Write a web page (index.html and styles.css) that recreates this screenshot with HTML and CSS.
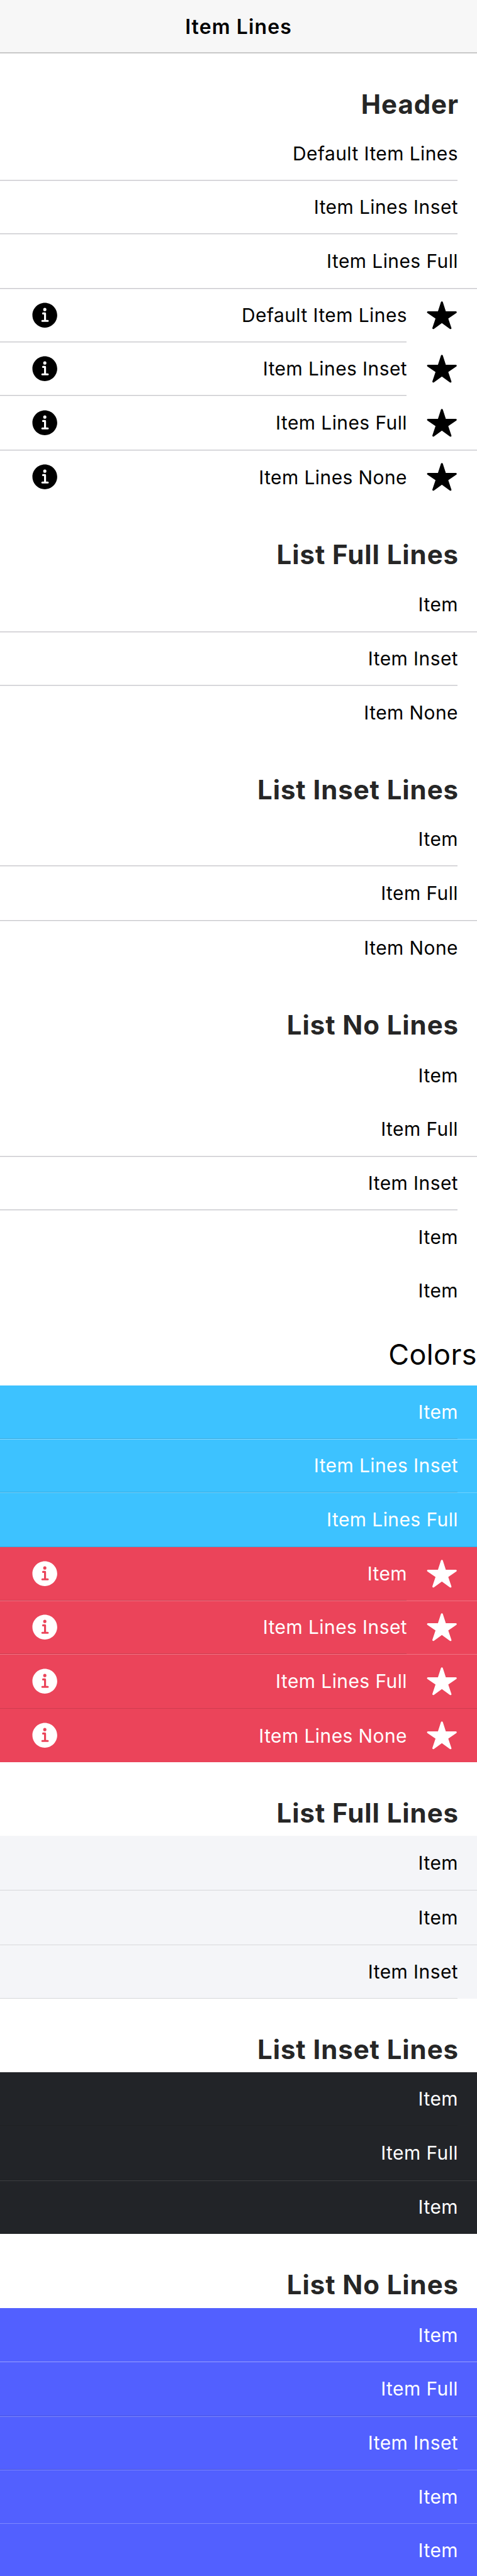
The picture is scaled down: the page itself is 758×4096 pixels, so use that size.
FILE: index.html
```html
<!DOCTYPE html>
<html lang="en">
<head>
<meta charset="utf-8">
<title>Item Lines</title>
<link rel="stylesheet" href="styles.css">
</head>
<body>
<svg class="symbols" aria-hidden="true">
  <symbol id="info" viewBox="0 0 512 512"><path d="M256 56C145.72 56 56 145.72 56 256s89.72 200 200 200 200-89.72 200-200S366.28 56 256 56zm0 82a26 26 0 11-26 26 26 26 0 0126-26zm48 226h-88a16 16 0 010-32h28v-88h-16a16 16 0 010-32h32a16 16 0 0116 16v104h28a16 16 0 010 32z"/></symbol>
  <symbol id="star" viewBox="0 0 512 512"><path d="M394 480a16 16 0 01-9.39-3L256 383.76 127.39 477a16 16 0 01-24.55-18.08L153 310.35 23 221.2a16 16 0 019-29.2h160.38l48.4-148.95a16 16 0 0130.44 0l48.4 149H480a16 16 0 019.05 29.2L359 310.35l50.13 148.53A16 16 0 01394 480z"/></symbol>
</svg>

<header class="toolbar"><h1 class="title">Item Lines</h1></header>

<main>
  <section class="list">
    <h2 class="list-header">Header</h2>
    <div class="item inset"><div class="inner"><span class="label">Default Item Lines</span></div></div>
    <div class="item inset"><div class="inner"><span class="label">Item Lines Inset</span></div></div>
    <div class="item full"><div class="inner"><span class="label">Item Lines Full</span></div></div>
    <div class="item inset"><div class="inner"><svg class="icon"><use href="#info"/></svg><span class="label">Default Item Lines</span></div><svg class="icon star"><use href="#star"/></svg></div>
    <div class="item inset"><div class="inner"><svg class="icon"><use href="#info"/></svg><span class="label">Item Lines Inset</span></div><svg class="icon star"><use href="#star"/></svg></div>
    <div class="item full"><div class="inner"><svg class="icon"><use href="#info"/></svg><span class="label">Item Lines Full</span></div><svg class="icon star"><use href="#star"/></svg></div>
    <div class="item none"><div class="inner"><svg class="icon"><use href="#info"/></svg><span class="label">Item Lines None</span></div><svg class="icon star"><use href="#star"/></svg></div>
  </section>

  <section class="list">
    <h2 class="list-header">List Full Lines</h2>
    <div class="item full"><div class="inner"><span class="label">Item</span></div></div>
    <div class="item inset"><div class="inner"><span class="label">Item Inset</span></div></div>
    <div class="item none"><div class="inner"><span class="label">Item None</span></div></div>
  </section>

  <section class="list">
    <h2 class="list-header">List Inset Lines</h2>
    <div class="item inset"><div class="inner"><span class="label">Item</span></div></div>
    <div class="item full"><div class="inner"><span class="label">Item Full</span></div></div>
    <div class="item none"><div class="inner"><span class="label">Item None</span></div></div>
  </section>

  <section class="list">
    <h2 class="list-header roomy">List No Lines</h2>
    <div class="item none"><div class="inner"><span class="label">Item</span></div></div>
    <div class="item full"><div class="inner"><span class="label">Item Full</span></div></div>
    <div class="item inset"><div class="inner"><span class="label">Item Inset</span></div></div>
    <div class="item none"><div class="inner"><span class="label">Item</span></div></div>
    <div class="item none"><div class="inner"><span class="label">Item</span></div></div>
  </section>

  <h2 class="heading">Colors</h2>

  <section class="list">
    <div class="item inset secondary"><div class="inner"><span class="label">Item</span></div></div>
    <div class="item inset secondary seam"><div class="inner"><span class="label">Item Lines Inset</span></div></div>
    <div class="item full secondary seam soft"><div class="inner"><span class="label">Item Lines Full</span></div></div>
    <div class="item inset danger"><div class="inner"><svg class="icon"><use href="#info"/></svg><span class="label">Item</span></div><svg class="icon star"><use href="#star"/></svg></div>
    <div class="item inset danger seam soft"><div class="inner"><svg class="icon"><use href="#info"/></svg><span class="label">Item Lines Inset</span></div><svg class="icon star"><use href="#star"/></svg></div>
    <div class="item full danger seam soft"><div class="inner"><svg class="icon"><use href="#info"/></svg><span class="label">Item Lines Full</span></div><svg class="icon star"><use href="#star"/></svg></div>
    <div class="item none danger"><div class="inner"><svg class="icon"><use href="#info"/></svg><span class="label">Item Lines None</span></div><svg class="icon star"><use href="#star"/></svg></div>
  </section>

  <section class="list">
    <h2 class="list-header">List Full Lines</h2>
    <div class="item full light"><div class="inner"><span class="label">Item</span></div></div>
    <div class="item full light"><div class="inner"><span class="label">Item</span></div></div>
    <div class="item inset light"><div class="inner"><span class="label">Item Inset</span></div></div>
  </section>

  <section class="list">
    <h2 class="list-header">List Inset Lines</h2>
    <div class="item inset dark"><div class="inner"><span class="label">Item</span></div></div>
    <div class="item full dark"><div class="inner"><span class="label">Item Full</span></div></div>
    <div class="item inset dark seam faint"><div class="inner"><span class="label">Item</span></div></div>
  </section>

  <section class="list">
    <h2 class="list-header roomy">List No Lines</h2>
    <div class="item none tertiary"><div class="inner"><span class="label">Item</span></div></div>
    <div class="item full tertiary seam"><div class="inner"><span class="label">Item Full</span></div></div>
    <div class="item inset tertiary seam soft"><div class="inner"><span class="label">Item Inset</span></div></div>
    <div class="item none tertiary seam soft"><div class="inner"><span class="label">Item</span></div></div>
    <div class="item none tertiary seam soft last"><div class="inner"><span class="label">Item</span></div></div>
  </section>
</main>
</body>
</html>
```

FILE: styles.css
```css
* { box-sizing: border-box; }

body {
  margin: 0;
  background: #fff;
  color: #000;
  font-family: Inter, "Liberation Sans", sans-serif;
}

.symbols { display: none; }

.toolbar {
  height: 85px;
  padding-top: 2px;
  background: #f7f7f7;
  border-bottom: 2px solid #c8c8c8;
  text-align: center;
}

.title {
  margin: 0;
  font-size: 32px;
  font-weight: 600;
  line-height: 82px;
  letter-spacing: 1.1px;
}

.list-header {
  height: 117px;
  margin: 0;
  padding: 56px 29px 0 0;
  color: #262626;
  font-size: 42px;
  font-weight: 700;
  line-height: 50px;
  letter-spacing: 0.9px;
  text-align: right;
}

.list-header.roomy { height: 118px; }

.heading {
  height: 109px;
  margin: 0;
  padding: 33px 0 0;
  font-size: 45px;
  font-weight: 400;
  line-height: 54px;
  letter-spacing: 0.4px;
  text-align: right;
}

.item {
  --line: #c8c7cc;
  --edge: rgba(200, 199, 204, 0.4);
  display: flex;
  height: 85px;
  padding-right: 31px;
}

.item.full {
  height: 87px;
  border-bottom: 1px solid var(--line);
  box-shadow: 0 1px var(--edge);
}

.item.last { height: 84px; }

.inner {
  display: flex;
  flex: 1;
  align-items: center;
  padding-left: 46px;
}

.inset .inner {
  border-bottom: 1px solid var(--line);
  box-shadow: 0 1px var(--edge);
}

.label {
  margin: 0 -1px 0 auto;
  font-size: 30px;
  line-height: 36px;
  letter-spacing: 0.4px;
  white-space: nowrap;
}

.inset .label { margin-bottom: 1px; }

.none .label { margin-top: 1px; }

.icon {
  flex: none;
  width: 50.4px;
  height: 50.4px;
  fill: currentColor;
}

.star {
  align-self: center;
  margin-left: 30.6px;
}

.secondary { --line: #36abe0; --edge: transparent; background: #3dc2ff; color: #fff; }
.danger { --line: #cf3c4f; --edge: transparent; background: #eb445a; color: #fff; }
.light { --line: #d7d8da; --edge: transparent; background: #f4f5f8; }
.dark { --line: #1e2023; --edge: transparent; background: #222428; color: #fff; }
.tertiary { --line: #4854e0; --edge: transparent; background: #5260ff; color: #fff; }

.item.seam { box-shadow: inset 0 1px rgba(255, 255, 255, 0.4); }
.item.seam.soft { box-shadow: inset 0 1px rgba(255, 255, 255, 0.25); }
.item.seam.faint { box-shadow: inset 0 1px rgba(255, 255, 255, 0.13); }
```
